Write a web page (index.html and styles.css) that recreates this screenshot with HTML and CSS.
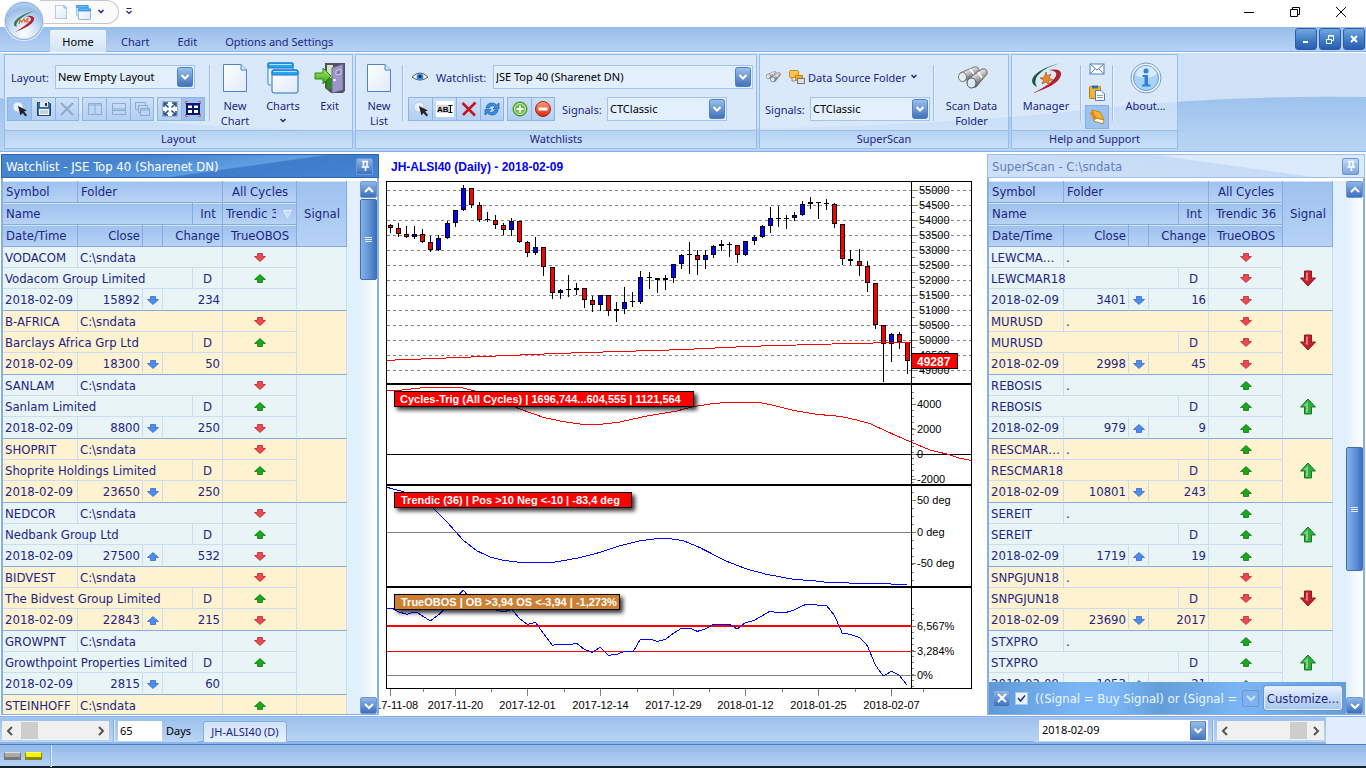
FILE: index.html
```html
<!DOCTYPE html>
<html lang="en">
<head>
    <meta charset="UTF-8">
    <meta name="viewport" content="width=device-width, initial-scale=1.0">
    <title>JH-ALSI40 (Daily)</title>
    <link rel="stylesheet" href="styles.css">
</head>
<body>
    <!-- Shared icons -->
    <svg class="defs" width="0" height="0" aria-hidden="true">
        <defs>
            <linearGradient id="gPaper" x1="0" y1="0" x2="1" y2="1">
                <stop offset="0" stop-color="#ffffff"/><stop offset="1" stop-color="#dfe9f8"/>
            </linearGradient>
            <linearGradient id="gGreen" x1="0" y1="0" x2="0" y2="1">
                <stop offset="0" stop-color="#a4ee60"/><stop offset="1" stop-color="#3aa51c"/>
            </linearGradient>
            <linearGradient id="gTube" x1="0" y1="0" x2="0.6" y2="1">
                <stop offset="0" stop-color="#ffffff"/><stop offset="0.45" stop-color="#d5d5d5"/><stop offset="1" stop-color="#444"/>
            </linearGradient>
            <linearGradient id="gRed" x1="0" y1="0" x2="0" y2="1">
                <stop offset="0" stop-color="#ff9a80"/><stop offset="1" stop-color="#d42a10"/>
            </linearGradient>
        </defs>
        <symbol id="page" viewBox="0 0 24 28">
            <path d="M0.5 0.5H18L23.5 6V27.5H0.5Z" fill="url(#gPaper)" stroke="#4a86c5"/>
            <path d="M18 0.5V6H23.5" fill="#d5e5f8" stroke="#4a86c5"/>
        </symbol>
        <symbol id="windows" viewBox="0 0 32 32">
            <path d="M4 23H2Q1 23 1 21V1H26V8" fill="#f4f4ff" stroke="#1b86dd"/>
            <rect x="1" y="1" width="25" height="5" rx="1" fill="#27a3f5" stroke="#1277cc"/>
            <rect x="2.500" y="2" width="22" height="1" fill="#b5e2ff"/>
            <rect x="5" y="8" width="26" height="23" rx="2" fill="url(#gPaper)" stroke="#1b6fc0"/>
            <rect x="5" y="8" width="26" height="5" rx="1" fill="#27a3f5" stroke="#1277cc"/>
            <rect x="6.500" y="9" width="23" height="1" fill="#b5e2ff"/>
        </symbol>
        <symbol id="exit" viewBox="0 0 32 32">
            <path d="M11 1H31V29L29 31H17L11 26Z" fill="#55505c"/>
            <path d="M13 3H19V27H13Z" fill="#cfe8c8"/>
            <path d="M13 16H19V27H13Z" fill="#2b8f1d"/>
            <path d="M18 6L29 2V28L18 31Z" fill="#9b95c8" stroke="#6a6598"/>
            <path d="M22 9L27 7V12L22 13Z" fill="#7f79b5" stroke="#dcd9f2" stroke-width="0.8"/>
            <circle cx="20.500" cy="18" r="1.300" fill="#fff"/>
            <path d="M1 11H9V6L17 14L9 22V17H1Z" fill="url(#gGreen)" stroke="#2c8a12"/>
        </symbol>
        <symbol id="binoc" viewBox="0 0 32 32">
            <path d="M4 11L18 5Q23 4 23 9L9 19Q2 19 4 11Z" fill="url(#gTube)" stroke="#777"/>
            <path d="M12 17L26 7Q32 6 31 12L20 25Q11 27 12 17Z" fill="url(#gTube)" stroke="#666"/>
            <path d="M14 7L18 12M22 10L26 16" stroke="#fff" stroke-width="1.500"/>
            <ellipse cx="6.500" cy="15" rx="4" ry="4.500" fill="#e6ecf4" stroke="#777"/>
            <ellipse cx="15.500" cy="21" rx="4.500" ry="5" fill="#dfeaf7" stroke="#44546c"/>
        </symbol>
        <symbol id="swirl" viewBox="0 0 32 32">
            <path d="M31 1Q12 5 4 14Q-1 21 7 25Q3 19 8 13Q15 5 31 1Z" fill="#17592f"/>
            <path d="M19 8Q32 6 31 13Q29 23 3 31Q22 22 26 14Q28 9 19 8Z" fill="#b3222b"/>
            <path d="M16 10L17 14L21 12L19 16L23 18L18.500 18.500L19 23L16 20L12 22L13.500 18L10 16L14 15.500Z" fill="#e8862b" stroke="#b3541a" stroke-width="0.7"/>
        </symbol>
        <symbol id="logo" viewBox="0 0 24 24">
            <path d="M22 2Q9 5 3 12Q0 17 5 18Q3 15 7 11Q12 6 22 2Z" fill="#2f7a48"/>
            <path d="M14 7Q23 6 22 11Q20 17 3 23Q15 16 19 11Q20 8 14 7Z" fill="#b3222b"/>
            <path d="M7 15L8 11L10 13L12 10L13 13L16 9L15 13L17 13" fill="none" stroke="#e06a2b" stroke-width="1.200"/>
        </symbol>
        <symbol id="cursor" viewBox="0 0 16 16">
            <circle cx="6" cy="6" r="5" fill="#e9f1fb" stroke="#b5cbe8"/>
            <path d="M6 5L15 9.500L12 10.500L15 14L13.500 15.500L10.500 12L8.500 14.500Z" fill="#222"/>
        </symbol>
        <symbol id="envelope" viewBox="0 0 16 16">
            <rect x="1" y="3" width="14" height="10" fill="#fff" stroke="#4d7ebb"/>
            <path d="M1.500 3.500L8 9L14.500 3.500M1.500 12.500L6 8M14.500 12.500L10 8" fill="none" stroke="#4d7ebb"/>
        </symbol>
        <symbol id="down" viewBox="0 0 12 9"><path d="M3.500 0.500H8.500V3.500H11.500L6 8.500L0.500 3.500H3.500Z" stroke-width="0.700"/></symbol>
        <symbol id="up" viewBox="0 0 12 9"><path d="M3.500 8.500H8.500V5.500H11.500L6 0.500L0.500 5.500H3.500Z" stroke-width="0.700"/></symbol>
        <symbol id="bigDown" viewBox="0 0 16 17"><path d="M4.500 1H11.500V8H15.500L8 16L0.500 8H4.500Z"/><path d="M6 2.500H8V11L4 9.500H6Z" fill="#fff" fill-opacity="0.4" stroke="none"/></symbol>
        <symbol id="bigUp" viewBox="0 0 16 17"><path d="M4.500 16H11.500V9H15.500L8 1L0.500 9H4.500Z"/><path d="M6 14.500H8V3.500L3 8H6Z" fill="#fff" fill-opacity="0.4" stroke="none"/></symbol>
        <symbol id="pin" viewBox="0 0 16 16"><path d="M5 3.500H11M6.500 3.500V9M10 3.500V9M4.500 9H12M8.500 9V13" fill="none" stroke="#fff" stroke-width="1.500"/></symbol>
    </svg>

    <header class="titlebar">
        <button class="orb" aria-label="Application menu"><svg width="24" height="24"><use href="#logo"/></svg></button>
        <div class="quick">
            <button class="plain" aria-label="New"><svg width="12" height="14"><use href="#page"/></svg></button>
            <button class="plain" aria-label="Charts"><svg width="15" height="15"><use href="#windows"/></svg></button>
            <svg width="6" height="6"><path d="M0.500 1L3 3.500L5.500 1" fill="none" stroke="#1c2585" stroke-width="1.500"/></svg>
        </div>
        <svg width="6" height="8"><path d="M0.500 0.500H5.500M0.500 3L3 5.500L5.500 3" fill="none" stroke="#1c2585" stroke-width="1.200"/></svg>
        <div class="win-buttons">
            <button class="plain" aria-label="Minimize"><svg width="12" height="12"><path d="M1 6.500H11" stroke="#000"/></svg></button>
            <button class="plain" aria-label="Restore"><svg width="12" height="12"><path d="M1.500 3.500H8.500V10.500H1.500ZM3.500 3.500V1.500H10.500V8.500H8.500" fill="none" stroke="#000"/></svg></button>
            <button class="plain" aria-label="Close"><svg width="12" height="12"><path d="M1 1L11 11M11 1L1 11" stroke="#000"/></svg></button>
        </div>
    </header>

    <nav class="tabs">
        <button class="tab active">Home</button>
        <button class="tab">Chart</button>
        <button class="tab">Edit</button>
        <button class="tab">Options and Settings</button>
        <div class="mdi">
            <button class="glossy" aria-label="Minimize chart"><svg width="16" height="16"><path d="M5 11H10" stroke="#fff" stroke-width="2"/></svg></button>
            <button class="glossy" aria-label="Restore chart"><svg width="16" height="16"><path d="M4.500 8.500H9.500V12.500H4.500ZM6.500 8V4.500H11.500V9.500H10M6 5H12M4 8.500H10" fill="none" stroke="#fff"/></svg></button>
            <button class="glossy" aria-label="Close chart"><svg width="16" height="16"><path d="M5 5L11 11M11 5L5 11" stroke="#fff" stroke-width="2"/></svg></button>
        </div>
    </nav>

    <section class="ribbon">
        <fieldset class="group">
            <div class="group-body">
                <div class="fields">
                    <div class="row indent">
                        <label class="w44" for="layoutSel">Layout:</label>
                        <select id="layoutSel" class="s140"><option>New Empty Layout</option></select>
                    </div>
                    <div class="row">
                        <div class="strip">
                            <button class="on" aria-label="Select"><svg width="16" height="16"><use href="#cursor"/></svg></button>
                            <button aria-label="Save"><svg width="16" height="16"><path d="M1.500 1.500H13L14.500 3V14.500H1.500Z" fill="#3a6ea8" stroke="#1d4370"/><path d="M4 1H12V6H4Z" fill="#dfe7ef"/><path d="M9 2H11V5H9Z" fill="#333"/><path d="M3 8H13V14H3Z" fill="#fff"/><path d="M4 10H12M4 12H12" stroke="#8ba4c0"/></svg></button>
                            <button aria-label="Delete"><svg width="16" height="16"><path d="M2 2L14 14M14 2L2 14" stroke="#8fa9c9" stroke-width="2"/></svg></button>
                        </div>
                        <div class="strip">
                            <button aria-label="Tile vertical"><svg width="16" height="16"><path d="M1.500 2.500H14.500V13.500H1.500ZM8 2.500V13.500M1.500 4H14.500" fill="none" stroke="#8aabd3"/></svg></button>
                            <button aria-label="Tile horizontal"><svg width="16" height="16"><path d="M1.500 2.500H14.500V13.500H1.500ZM1.500 8H14.500M1.500 9.500H14.500" fill="none" stroke="#8aabd3"/></svg></button>
                            <button aria-label="Cascade"><svg width="16" height="16"><path d="M4 8.500H1.500V1.500H11.500V4M6.500 11.500H4.500V4.500H13.500V7M6.500 7.500H15.500V14.500H6.500ZM6.500 9H15.500" fill="none" stroke="#8aabd3"/></svg></button>
                        </div>
                        <div class="strip">
                            <button aria-label="Full screen"><svg width="16" height="16"><rect x="0.500" y="0.500" width="15" height="15" fill="#fff" stroke="#9ab0c8"/><path d="M2 6V2H6M10 2H14V6M14 10V14H10M6 14H2V10M3 3L6.500 6.500M13 3L9.500 6.500M13 13L9.500 9.500M3 13L6.500 9.500" fill="none" stroke="#1f4a84" stroke-width="1.500"/></svg></button>
                            <button class="on" aria-label="Grid"><svg width="16" height="16"><rect x="1" y="2" width="14" height="12" fill="#0c1470"/><path d="M3 4.500H7V7H3ZM9 4.500H13V7H9ZM3 9H7V12H3ZM9 9H13V12H9Z" fill="#fff"/><path d="M0.500 3V0.500H3M13 0.500H15.500V3M15.500 13V15.500H13M3 15.500H0.500V13" fill="none" stroke="#f05050"/></svg></button>
                        </div>
                    </div>
                </div>
                <div class="sep"></div>
                <button class="big"><svg width="24" height="28"><use href="#page"/></svg><span>New<br>Chart</span></button>
                <button class="big"><svg width="32" height="32"><use href="#windows"/></svg><span>Charts</span><svg class="drop" width="6" height="6"><path d="M0.500 1L3 3.500L5.500 1" fill="none" stroke="#1c2585" stroke-width="1.500"/></svg></button>
                <button class="big w45"><svg width="32" height="32"><use href="#exit"/></svg><span>Exit</span></button>
            </div>
            <div class="group-name">Layout</div>
        </fieldset>

        <fieldset class="group">
            <div class="group-body">
                <button class="big w46"><svg width="24" height="28"><use href="#page"/></svg><span>New<br>List</span></button>
                <div class="sep"></div>
                <div class="fields">
                    <div class="row indent">
                        <svg width="16" height="16"><path d="M0 8Q8 0 16 8Q8 14 0 8Z" fill="#fff" stroke="#555"/><circle cx="8" cy="8" r="3.500" fill="#3c8fd0"/><circle cx="8" cy="7.500" r="1.500" fill="#124"/></svg>
                        <label class="w57 gap" for="watchSel">Watchlist:</label>
                        <select id="watchSel" class="s260"><option>JSE Top 40 (Sharenet DN)</option></select>
                    </div>
                    <div class="row">
                        <div class="strip">
                            <button aria-label="Pick"><svg width="16" height="16"><use href="#cursor"/></svg></button>
                            <button aria-label="Rename"><svg width="18" height="16"><rect width="18" height="16" fill="#fff"/><rect x="1" y="4" width="13" height="8" fill="#d8d8d8"/><text x="1" y="11" class="abi">AB</text><path d="M12.500 4.500H16.500M14.500 4.500V11.500M12.500 11.500H16.500" stroke="#000"/></svg></button>
                            <button aria-label="Remove list"><svg width="16" height="16"><path d="M1.500 2L14 14.500M14.500 1.500L2 14" stroke="#c4161c" stroke-width="2.500"/></svg></button>
                            <button aria-label="Refresh"><svg width="16" height="16"><path d="M2 7Q3 2 8 2Q11 2 12.500 4L15 2V8H9L11 6Q8 3 5 7ZM14 9Q13 14 8 14Q5 14 3.500 12L1 14V8.500H7L5 10.500Q8 13 11 9Z" fill="#3b8fe0" stroke="#1b5da8" stroke-width="0.7"/></svg></button>
                        </div>
                        <div class="strip">
                            <button aria-label="Add"><svg width="16" height="16"><circle cx="8" cy="8" r="7" fill="#6cc04a" stroke="#3c8a2a"/><circle cx="8" cy="8" r="5.500" fill="none" stroke="#c8f0b4"/><path d="M8 4.500V11.500M4.500 8H11.500" stroke="#fff" stroke-width="2"/></svg></button>
                            <button aria-label="Subtract"><svg width="16" height="16"><circle cx="8" cy="8" r="7.500" fill="url(#gRed)" stroke="#b02010"/><path d="M3.500 8H12.500" stroke="#fff" stroke-width="3"/></svg></button>
                        </div>
                        <label class="w45 lead" for="sigSel">Signals:</label>
                        <select id="sigSel" class="s120"><option>CTClassic</option></select>
                    </div>
                </div>
            </div>
            <div class="group-name">Watchlists</div>
        </fieldset>

        <fieldset class="group">
            <div class="group-body">
                <div class="fields inset">
                    <div class="row">
                        <svg width="16" height="16"><use href="#binoc"/></svg>
                        <button class="plain source">
                            <svg width="16" height="16"><rect x="0.500" y="1.500" width="9" height="7" rx="1" fill="#fbc348" stroke="#c98a1a"/><path d="M3 9V12H6" fill="none" stroke="#888"/><rect x="6.500" y="6.500" width="7" height="5" fill="#f5a623" stroke="#c98a1a"/><rect x="8.500" y="9.500" width="7" height="5" fill="#ddd" stroke="#777"/></svg>
                            Data Source Folder
                            <svg class="drop-right" width="6" height="6"><path d="M0.500 1L3 3.500L5.500 1" fill="none" stroke="#1c2585" stroke-width="1.500"/></svg>
                        </button>
                    </div>
                    <div class="row">
                        <label class="w45" for="scanSel">Signals:</label>
                        <select id="scanSel" class="s120"><option>CTClassic</option></select>
                    </div>
                </div>
                <div class="sep"></div>
                <button class="big w73"><svg width="32" height="32"><use href="#binoc"/></svg><span>Scan Data<br>Folder</span></button>
            </div>
            <div class="group-name">SuperScan</div>
        </fieldset>

        <fieldset class="group">
            <div class="group-body">
                <button class="big w68"><svg width="32" height="32"><use href="#swirl"/></svg><span>Manager</span></button>
                <div class="sep"></div>
                <div class="stack">
                    <button aria-label="Mail"><svg width="16" height="16"><use href="#envelope"/></svg></button>
                    <button aria-label="Paste"><svg width="16" height="16"><rect x="0.500" y="1.500" width="11" height="12" rx="1" fill="#f2b52c" stroke="#b07a12"/><rect x="3" y="0.500" width="6" height="3" fill="#3b6ea8"/><path d="M6.500 5.500H12L15.500 9V15.500H6.500Z" fill="#fff" stroke="#4d7ebb"/><path d="M8 10.500H14M8 12.500H14" stroke="#7da0cc"/></svg></button>
                    <button class="on" aria-label="Help book"><svg width="16" height="16"><path d="M3 1L11 3L15 11L7 9Z" fill="#fcb52c" stroke="#c4851a"/><path d="M3 1L1 4L5 12L7 9Z" fill="#e08a14"/><path d="M5 12L7 9L15 11L14 15Z" fill="#fff" stroke="#c4851a"/></svg></button>
                </div>
                <div class="sep"></div>
                <button class="big w63"><svg width="32" height="32"><circle cx="16" cy="16" r="15" fill="#f2f8ff" stroke="#7b9cc4"/><circle cx="16" cy="16" r="12.500" fill="#a8d2f7" stroke="#5c9ade"/><path d="M5 13Q16 20 27 12Q24 4 16 4Q8 4 5 13Z" fill="#d5ebff"/><circle cx="16" cy="9" r="2.500" fill="#2f7fd6"/><path d="M12.500 13H18V22.500H20.500V24.500H12V22.500H14.500V15H12.500Z" fill="#2f7fd6"/></svg><span>About...</span></button>
            </div>
            <div class="group-name">Help and Support</div>
        </fieldset>
    </section>

    <main class="workspace">
        <section class="panel">
            <h2 class="panel-title active">Watchlist - JSE Top 40 (Sharenet DN)<button class="mini" aria-label="Pin watchlist"><svg width="16" height="16"><use href="#pin"/></svg></button></h2>
            <div class="panel-body">
                <div class="list"><table id="watchlist"></table></div>
                <div class="scroll">
                    <button class="mini" aria-label="Scroll up"><svg width="10" height="10"><path d="M1 7L5 3L9 7" fill="none" stroke="#fff" stroke-width="2"/></svg></button>
                    <div class="thumb first"></div>
                    <button class="mini last" aria-label="Scroll down"><svg width="10" height="10"><path d="M1 3L5 7L9 3" fill="none" stroke="#fff" stroke-width="2"/></svg></button>
                </div>
            </div>
        </section>

        <section class="chart"><svg id="chart" viewBox="0 0 608 561" preserveAspectRatio="xMinYMin meet"></svg></section>

        <section class="panel">
            <h2 class="panel-title">SuperScan - C:\sndata<button class="mini soft" aria-label="Pin scan"><svg width="16" height="16"><use href="#pin"/></svg></button></h2>
            <div class="panel-body">
                <div class="list">
                    <div class="clip"><table id="superscan"></table></div>
                    <div class="filter">
                        <button class="mini" aria-label="Close filter"><svg width="10" height="10"><path d="M1 1L9 9M9 1L1 9" stroke="#fff" stroke-width="2"/></svg></button>
                        <input type="checkbox" id="filterOn" checked>
                        <label for="filterOn">((Signal = Buy Signal) or (Signal =</label>
                        <button class="mini faded" aria-label="Filter history"><svg width="10" height="10"><path d="M1 3L5 7L9 3" fill="none" stroke="#cfe3fa" stroke-width="2"/></svg></button>
                        <button class="customize">Customize...</button>
                    </div>
                </div>
                <div class="scroll">
                    <button class="mini" aria-label="Scroll up"><svg width="10" height="10"><path d="M1 7L5 3L9 7" fill="none" stroke="#fff" stroke-width="2"/></svg></button>
                    <div class="thumb second"></div>
                    <button class="mini last" aria-label="Scroll down"><svg width="10" height="10"><path d="M1 3L5 7L9 3" fill="none" stroke="#fff" stroke-width="2"/></svg></button>
                </div>
            </div>
        </section>
    </main>

    <section class="bottombar">
        <div class="bar-main">
            <div class="hscroll">
                <button class="plain" aria-label="Left"><svg width="8" height="10"><path d="M6 1L2 5L6 9" fill="none" stroke="#555" stroke-width="2"/></svg></button>
                <span class="hthumb"></span>
                <button class="plain right" aria-label="Right"><svg width="8" height="10"><path d="M2 1L6 5L2 9" fill="none" stroke="#555" stroke-width="2"/></svg></button>
            </div>
            <div class="bar-sep"></div>
            <input type="text" id="days" value="65">
            <label for="days">Days</label>
            <div class="sheet-tabs"><button class="sheet">JH-ALSI40 (D)</button></div>
            <select class="date" aria-label="Date"><option>2018-02-09</option></select>
            <div class="bar-sep"></div>
            <div class="hscroll">
                <button class="plain" aria-label="Left"><svg width="8" height="10"><path d="M6 1L2 5L6 9" fill="none" stroke="#555" stroke-width="2"/></svg></button>
                <span class="hthumb end"></span>
                <button class="plain right" aria-label="Right"><svg width="8" height="10"><path d="M2 1L6 5L2 9" fill="none" stroke="#555" stroke-width="2"/></svg></button>
            </div>
        </div>
    </section>

    <footer class="status">
        <span class="led"></span>
        <span class="led lit"></span>
        <span class="bar-sep"></span>
    </footer>

    <script src="script.js"></script>
</body>
</html>
```
FILE: styles.css
```css
* {
    box-sizing: border-box;
}

body {
    margin: 0;
    height: 100vh;
    display: flex;
    flex-direction: column;
    overflow: hidden;
    background: #fff;
    color: #1c2585;
    font-family: "Noto Sans", "Open Sans", sans-serif;
    font-size: 11px;
    line-height: 15px;
}

button, select, input {
    font: inherit;
    color: inherit;
}

svg {
    display: block;
    flex: none;
}

.defs {
    position: absolute;
}

.plain {
    border: 0;
    padding: 0;
    background: none;
    display: flex;
    align-items: center;
}

/* Title bar */
.titlebar {
    height: 27px;
    flex: none;
    display: flex;
    align-items: center;
    gap: 7px;
    padding: 0 19px 3px 40px;
    position: relative;
}

.orb {
    position: absolute;
    left: 4px;
    top: 1px;
    z-index: 2;
    width: 40px;
    height: 40px;
    padding: 0;
    display: flex;
    align-items: center;
    justify-content: center;
    border-radius: 50%;
    border: 2px solid #dceafa;
    outline: 1px solid #8aa9d2;
    outline-offset: -2px;
    background: radial-gradient(circle at 50% 85%, #ffffff, #c3daf5 45%, #9abde8 70%, #d5e5f8);
}

.quick {
    height: 24px;
    width: 79px;
    padding-left: 15px;
    display: flex;
    align-items: center;
    gap: 9px;
    border: 1px solid #c8c8cc;
    border-left: 0;
    border-radius: 0 12px 12px 0;
    background: #fafafa;
}

.quick > svg {
    margin-left: -2px;
}

.win-buttons {
    display: flex;
    gap: 34px;
    margin-left: auto;
}

/* Ribbon tabs */
.tabs {
    height: 25px;
    flex: none;
    display: flex;
    align-items: flex-end;
    padding-left: 49px;
    background: linear-gradient(#98bdea, #b7d2f3);
    border-bottom: 1px solid #86aee8;
}

.tab {
    height: 21px;
    padding: 0 13px;
    border: 1px solid transparent;
    border-bottom: 0;
    background: none;
    white-space: nowrap;
}

.tab.active {
    width: 58px;
    padding: 0;
    height: 22px;
    margin-bottom: -1px;
    color: #000;
    background: linear-gradient(#e9f3fe, #d3e4f8);
    border-color: #a6c6ef;
    border-top-color: #f6faff;
    border-radius: 3px 3px 0 0;
}

.mdi {
    display: flex;
    gap: 2px;
    margin: 0 1px 1px auto;
}

.glossy {
    width: 22px;
    height: 22px;
    padding: 0;
    display: flex;
    align-items: center;
    justify-content: center;
    border: 1px solid #2c5ca8;
    border-radius: 3px;
    background: linear-gradient(#74a9e0, #3f7cc6 55%, #285cae);
}

/* Ribbon */
.ribbon {
    height: 100px;
    flex: none;
    display: flex;
    gap: 2px;
    padding: 1px 4px 2px;
    border: 1px solid #86aee8;
    border-top-color: #fff;
    border-width: 1px 0;
    background: #cfe1f6 url("data:image/svg+xml,%3Csvg xmlns='http://www.w3.org/2000/svg' viewBox='0 0 1366 98' preserveAspectRatio='none'%3E%3ClinearGradient id='a' x2='0' y2='1'%3E%3Cstop stop-color='%239dc2ec'/%3E%3Cstop offset='1' stop-color='%23b9d5f4'/%3E%3C/linearGradient%3E%3Cpath d='M0 45Q150 82 480 78Q900 80 1100 55Q1230 42 1366 44V98H0Z' fill='url(%23a)'/%3E%3C/svg%3E") 0 0 / 100% 100%;
}

.group {
    margin: 0;
    padding: 0;
    min-width: 0;
    border: 1px solid #98bdeb;
    display: flex;
    flex-direction: column;
    background: rgba(224, 237, 252, 0.62);
}

.group-body {
    flex: 1;
    display: flex;
}

.group-name {
    height: 18px;
    line-height: 16px;
    text-align: center;
    border-top: 1px solid #98bdeb;
    background: linear-gradient(rgba(176, 207, 243, 0.8), rgba(200, 222, 247, 0.8));
}

.fields {
    padding: 10px 3px 0 2px;
    display: flex;
    flex-direction: column;
    gap: 8px;
}

.fields.inset {
    padding-left: 5px;
}

.row {
    height: 24px;
    display: flex;
    align-items: center;
    gap: 3px;
}

.row.indent {
    padding-left: 4px;
    gap: 0;
}

.gap {
    margin-left: 8px;
}

.lead {
    margin: 0 -3px 0 4px;
}

.row label {
    flex: none;
    white-space: nowrap;
}

.w44 { width: 44px; }
.w45 { width: 45px; }
.w57 { width: 57px; }
.inset .w45 { margin-right: -3px; }

select {
    appearance: none;
    height: 24px;
    padding: 0 20px 2px 2px;
    color: #000;
    border: 1px solid #a4c4ee;
    border-radius: 0;
    background: #e2effd url("data:image/svg+xml,%3Csvg xmlns='http://www.w3.org/2000/svg' width='16' height='20'%3E%3ClinearGradient id='a' x2='0' y2='1'%3E%3Cstop stop-color='%239cc0ea'/%3E%3Cstop offset='1' stop-color='%233f70b8'/%3E%3C/linearGradient%3E%3Crect x='.5' y='.5' width='15' height='19' rx='2' fill='url(%23a)' stroke='%23527fc0'/%3E%3Cpath d='M4.500 8L8 11.500L11.500 8' fill='none' stroke='white' stroke-width='2'/%3E%3C/svg%3E") no-repeat right 1px center;
}

.s120 { width: 120px; }
.s140 { width: 140px; }
.s260 { width: 260px; }

.strip {
    display: flex;
    height: 24px;
    border: 1px solid #8db4e8;
}

.strip button {
    width: 24px;
    padding: 0;
    display: flex;
    align-items: center;
    justify-content: center;
    border: 0;
    border-right: 1px solid #8db4e8;
    background: linear-gradient(#cbdff7, #b3d0f3);
}

.strip button:last-child {
    width: 22px;
    border-right: 0;
}

.strip button.on, .stack button.on {
    background: #9cc2f0;
}

.abi {
    font: bold 8px "Liberation Sans", sans-serif;
}

.sep {
    width: 2px;
    height: 56px;
    margin-top: 10px;
    border-left: 1px solid #9dbfea;
    border-right: 1px solid #e8f2fd;
}

.fields + .sep {
    margin-left: 1px;
}

.inset + .sep {
    margin-left: 0;
}

.sep + .fields {
    padding-left: 4px;
}

.big {
    width: 48px;
    padding: 7px 0 0;
    border: 0;
    background: none;
    display: flex;
    flex-direction: column;
    align-items: center;
    white-space: nowrap;
}

.big > svg:first-child {
    height: 32px;
    margin-bottom: 4px;
}

.big .drop {
    margin-top: 5px;
}

.big.w45 { width: 45px; }
.big.w46 { width: 46px; }
.big.w63 { width: 63px; }
.big.w68 { width: 68px; }
.big.w73 { width: 73px; }

.source {
    gap: 3px;
    margin-left: 5px;
}

.drop-right {
    margin-left: 2px;
}

.stack {
    padding: 2px 3px 0;
}

.stack button {
    width: 24px;
    height: 24px;
    padding: 0;
    display: flex;
    align-items: center;
    justify-content: center;
    border: 1px solid transparent;
    background: none;
}

.stack button.on {
    border-color: #86aee8;
}

/* Docked panels */
.workspace {
    flex: 1;
    min-height: 0;
    display: flex;
    padding: 2px 1px 1px;
}

.panel {
    width: 378px;
    flex: none;
    display: flex;
    flex-direction: column;
    border-bottom: 1px solid #86aee8;
    font-family: "DejaVu Sans Condensed", "DejaVu Sans", sans-serif;
    font-size: 13px;
}

.panel-title {
    height: 24px;
    flex: none;
    margin: 0;
    padding: 0 5px 0 4px;
    display: flex;
    align-items: center;
    justify-content: space-between;
    font-size: 13px;
    font-weight: normal;
    color: #5f7fc4;
    border: 1px solid #9cc0ee;
    background: linear-gradient(188deg, #dcebfc 38%, #c6dbf5 40%, #cfe1f7);
}

.panel-title.active {
    color: #fff;
    border-color: #2f62b3;
    background: linear-gradient(172deg, #4784cf 30%, #5e9fe3 60%, #3f7cca 62%, #4585d0);
}

.panel-body {
    flex: 1;
    min-height: 0;
    display: flex;
    border: solid #86aee8;
    border-width: 0 2px;
    padding-top: 3px;
}

.list {
    flex: 1;
    min-width: 0;
    overflow: hidden;
    display: flex;
    flex-direction: column;
    background: #e2effd;
}

.clip {
    flex: 1;
    min-height: 0;
    overflow: hidden;
}

table {
    width: 344px;
    table-layout: fixed;
    border-collapse: separate;
    border-spacing: 0;
}

th, td {
    height: 21px;
    padding: 1px 2px 0 2px;
    line-height: 16px;
    font-weight: normal;
    text-align: left;
    white-space: nowrap;
    overflow: hidden;
    text-overflow: ellipsis;
    border: solid #cbdcf5;
    border-width: 0 1px 1px 0;
}

th {
    height: 22px;
    padding: 1px 2px 0 3px;
    border-color: #84abe4;
    box-shadow: inset 0 1px #d6e6fa;
    background: linear-gradient(#9dc1ee, #b7d3f5);
}

.record:nth-of-type(odd) td {
    background: #e8f4f6;
}

.record:nth-of-type(even) td {
    background: #fff2d0;
}

.record tr:last-child td, .record .tall {
    height: 22px;
    border-bottom-color: #84abe4;
}

.record .tall {
    padding-top: 0;
}

td svg {
    margin: auto;
}

.num { text-align: right; }
.mid { text-align: center; }

.trend {
    text-overflow: clip;
}

.trend div {
    display: flex;
    align-items: center;
    gap: 7px;
}

.trend span {
    width: 50px;
    overflow: hidden;
}

.red { fill: #f04850; stroke: #b01c24; }
.green { fill: #18a818; stroke: #0a6a0c; }
.blue { fill: #4d8cf5; stroke: #2a5cc0; }
.sell { fill: #c4202c; stroke: #8c1a20; }
.buy { fill: #2fae3c; stroke: #127a20; }

.mini {
    width: 17px;
    height: 17px;
    flex: none;
    padding: 0;
    display: flex;
    align-items: center;
    justify-content: center;
    border: 1px solid #6d98d6;
    border-radius: 2px;
    background: linear-gradient(#8fb6e8, #3d70bb);
}

.mini.soft { background: linear-gradient(#c3dbf7, #7da6de); }
.mini.faded { background: #7fb2ec; }

.scroll {
    width: 17px;
    flex: none;
    display: flex;
    flex-direction: column;
    background: linear-gradient(90deg, #e2effd, #fff);
}

.thumb {
    border: 1px solid #3f6fb8;
    border-radius: 2px;
    background: linear-gradient(90deg, #86b1e8, #5c8fd4 60%, #3f70bb);
    display: flex;
    align-items: center;
    justify-content: center;
}

.thumb::after {
    content: "";
    width: 7px;
    height: 5px;
    background: repeating-linear-gradient(#dfebfb 0 1px, transparent 1px 2px);
}

.thumb.first {
    margin-top: 1px;
    height: 81px;
}

.thumb.second {
    margin-top: 249px;
    height: 124px;
}

.last {
    margin-top: auto;
}

.filter {
    height: 32px;
    flex: none;
    display: flex;
    align-items: center;
    gap: 5px;
    padding: 0 4px;
    color: #eef6ff;
    background: linear-gradient(90deg, #5f9ad8, #7ab6f5 25%, #7ab6f5 35%, #639ed9 48%, #7ab6f5 70%, #639ed9);
}

.filter label {
    flex: 1;
    min-width: 0;
    padding-left: 2px;
    white-space: nowrap;
}

.filter input {
    appearance: none;
    width: 13px;
    height: 13px;
    flex: none;
    margin: 0;
    border: 1px solid #a8c8f0;
    background: #e8f1fc url("data:image/svg+xml,%3Csvg xmlns='http://www.w3.org/2000/svg' width='11' height='11'%3E%3Cpath d='M2 5L4.500 8L9 2.500' fill='none' stroke='%231c3585' stroke-width='1.500'/%3E%3C/svg%3E") center;
}

.customize {
    width: 78px;
    height: 24px;
    flex: none;
    padding: 0;
    color: #1c2585;
    border: 1px solid #dfeafa;
    outline: 1px solid #6f97cf;
    border-radius: 2px;
    background: linear-gradient(#e6f0fc, #a9c7ee);
}

/* Price chart */
.chart {
    flex: 1;
    min-width: 0;
    overflow: hidden;
    font-family: "Liberation Sans", sans-serif;
    font-size: 11px;
}

.chart svg {
    width: 100%;
    height: 100%;
    overflow: hidden;
    shape-rendering: crispEdges;
}

.chart text { fill: #000; }
.chart .title { font-size: 12px; font-weight: bold; fill: #00f; }
.chart .tag { font-weight: bold; fill: #fff; }
.chart .price { font-size: 12px; }
.chart .shadow { filter: drop-shadow(3px 3px 2px rgba(0, 0, 0, 0.8)); }
.line { fill: none; stroke-width: 1; }

/* Bottom bars */
.bottombar {
    height: 29px;
    flex: none;
    background: #e0edfc;
    border-top: 1px solid #86aee8;
    border-bottom: 1px solid #4f7ec4;
}

.bar-main {
    height: 27px;
    margin-right: 40px;
    padding: 1px 2px 0;
    display: flex;
    align-items: center;
    border-top: 1px solid #a9c8f0;
    border-bottom: 2px solid #8fb6e8;
    background: linear-gradient(#9dc1ec, #bad4f4);
}

.hscroll {
    width: 107px;
    height: 19px;
    display: flex;
    align-items: center;
    padding: 0 4px;
    background: #f0f0f0;
}

.hthumb {
    width: 17px;
    height: 17px;
    margin-left: 7px;
    background: #cdcdcd;
}

.hthumb.end { margin-left: 61px; }
.right { margin-left: auto; }

.bar-sep {
    width: 2px;
    height: 22px;
    margin: 0 3px 0 4px;
    border-left: 1px solid #86aee8;
    border-right: 1px solid #e2effd;
}

.bottombar input {
    width: 44px;
    height: 20px;
    padding: 0 2px;
    color: #000;
    border: 0;
    background: #fff;
}

.bottombar label {
    width: 36px;
    color: #000;
    padding-left: 4px;
}

.sheet-tabs {
    flex: 1;
    height: 22px;
    padding-left: 5px;
    margin-right: 5px;
    border-bottom: 1px solid #86aee8;
}

.sheet {
    width: 84px;
    height: 21px;
    padding: 0;
    margin-top: 1px;
    white-space: nowrap;
    border: 1px solid #86aee8;
    border-bottom: 0;
    border-radius: 3px 3px 0 0;
    background: linear-gradient(#cfe2f9, #e6f1fe);
}

.date {
    width: 169px;
    height: 21px;
    background-color: #fff;
    border-color: #fff;
}

.status {
    height: 23px;
    flex: none;
    display: flex;
    align-items: center;
    padding-left: 4px;
    gap: 4px;
    border-bottom: 2px solid #16202c;
    background: linear-gradient(#93b9e8, #b5d1f3);
}

.led {
    width: 17px;
    height: 8px;
    border: 1px solid #777;
    border-bottom-width: 3px;
    border-top-color: #ddd;
    background: #aaa;
}

.led.lit {
    border-color: #ffff70 #8a8a00 #8a8a00;
    background: #f5f500;
}
```
FILE: script.js
```js
// ---- Tables ----
const watchlist = [
    ['VODACOM', 'C:\\sndata', 'Vodacom Group Limited', 15892, 'd', 234, 'du-'],
    ['B-AFRICA', 'C:\\sndata', 'Barclays Africa Grp Ltd', 18300, 'd', 50, 'du-'],
    ['SANLAM', 'C:\\sndata', 'Sanlam Limited', 8800, 'd', 250, 'dud'],
    ['SHOPRIT', 'C:\\sndata', 'Shoprite Holdings Limited', 23650, 'd', 250, 'du-'],
    ['NEDCOR', 'C:\\sndata', 'Nedbank Group Ltd', 27500, 'u', 532, 'dud'],
    ['BIDVEST', 'C:\\sndata', 'The Bidvest Group Limited', 22843, 'u', 215, 'dud'],
    ['GROWPNT', 'C:\\sndata', 'Growthpoint Properties Limited', 2815, 'd', 60, 'du-'],
    ['STEINHOFF', 'C:\\sndata', '', '', '-', '', 'u--']
];

const superscan = [
    ['LEWCMAR18', '.', 'LEWCMAR18', 3401, 'd', 16, 'ddd', 'sell'],
    ['MURUSD', '.', 'MURUSD', 2998, 'd', 45, 'ddd', 'sell'],
    ['REBOSIS', '.', 'REBOSIS', 979, 'u', 9, 'uuu', 'buy'],
    ['RESCMAR18', '.', 'RESCMAR18', 10801, 'd', 243, 'uuu', 'buy'],
    ['SEREIT', '.', 'SEREIT', 1719, 'u', 19, 'uuu', 'buy'],
    ['SNPGJUN18', '.', 'SNPGJUN18', 23690, 'd', 2017, 'ddd', 'sell'],
    ['STXPRO', '.', 'STXPRO', 1053, 'u', 21, 'uuu', 'buy']
];

function arrow(dir, color) {
    if (dir === '-') return '';
    const cls = color || (dir === 'u' ? 'green' : 'red');
    return `<svg width="12" height="9" class="${cls}"><use href="#${dir === 'u' ? 'up' : 'down'}"/></svg>`;
}

function signal(kind) {
    if (!kind) return '';
    return `<svg width="16" height="17" class="${kind}"><use href="#${kind === 'buy' ? 'bigUp' : 'bigDown'}"/></svg>`;
}

function buildTable(id, rows, trendHeader) {
    let html = '<colgroup>' + [75, 65, 20, 30, 30, 74, 50].map(w => `<col style="width:${w}px">`).join('') + '</colgroup>';
    html += `<thead>
        <tr><th>Symbol</th><th colspan="4">Folder</th><th class="mid">All Cycles</th><th class="mid" rowspan="3">Signal</th></tr>
        <tr><th colspan="4">Name</th><th class="mid">Int</th>${trendHeader}</tr>
        <tr><th>Date/Time</th><th class="num">Close</th><th></th><th class="num" colspan="2">Change</th><th class="mid">TrueOBOS</th></tr>
    </thead>`;
    rows.forEach(([symbol, folder, name, close, dir, change, marks, sig]) => {
        html += `<tbody class="record">
            <tr><td>${symbol}</td><td colspan="4">${folder}</td><td>${arrow(marks[0])}</td><td class="tall" rowspan="3">${signal(sig)}</td></tr>
            <tr><td colspan="4">${name}</td><td class="mid">D</td><td>${arrow(marks[1])}</td></tr>
            <tr><td>2018-02-09</td><td class="num">${close}</td><td>${arrow(dir, 'blue')}</td><td class="num" colspan="2">${change}</td><td>${arrow(marks[2])}</td></tr>
        </tbody>`;
    });
    document.getElementById(id).innerHTML = html;
}

buildTable('watchlist', watchlist,
    '<th class="trend"><div><span>Trendic 36</span><svg width="9" height="8"><path d="M0.500 0.500H8.500L4.500 7.500Z" fill="#c5dbf6" stroke="#e8f2fd"/></svg></div></th>');
buildTable('superscan', superscan, '<th class="mid">Trendic 36</th>');

// ---- Chart ----
// All series are kept in thirds of a pixel: [x, high, bodyTop, bodyBottom, low, kind]
const candles = [
    [31, 222, 226, 233, 248, 'r'], [55, 219, 235, 251, 260, 'r'], [79, 228, 253, 260, 263, 'r'], [103, 228, 253, 260, 266, 'b'],
    [127, 237, 253, 275, 278, 'r'], [151, 258, 277, 299, 305, 'r'], [175, 255, 265, 299, 302, 'b'], [202, 214, 220, 263, 266, 'b'],
    [226, 181, 181, 217, 230, 'b'], [250, 105, 115, 179, 182, 'b'], [274, 115, 115, 163, 173, 'r'], [298, 156, 166, 209, 215, 'r'],
    [322, 186, 208, 208, 215, 'k'], [346, 195, 211, 223, 236, 'r'], [370, 220, 226, 239, 254, 'r'], [394, 205, 214, 239, 257, 'b'],
    [418, 213, 214, 275, 278, 'r'], [442, 273, 277, 307, 320, 'r'], [466, 261, 292, 307, 314, 'b'], [490, 292, 292, 350, 377, 'r'],
    [517, 352, 352, 428, 446, 'r'], [541, 417, 421, 428, 446, 'b'], [565, 375, 418, 418, 440, 'k'], [589, 399, 415, 418, 434, 'k'],
    [613, 415, 415, 449, 473, 'r'], [637, 438, 451, 464, 485, 'r'], [661, 436, 436, 464, 482, 'b'], [685, 436, 436, 482, 497, 'r'],
    [709, 456, 478, 481, 515, 'k'], [733, 411, 457, 476, 491, 'b'], [757, 426, 454, 454, 470, 'k'], [781, 363, 382, 455, 460, 'b'],
    [808, 366, 382, 382, 416, 'k'], [832, 385, 385, 388, 428, 'k'], [856, 376, 385, 388, 419, 'k'], [880, 343, 343, 383, 398, 'b'],
    [904, 312, 316, 341, 356, 'b'], [928, 276, 313, 313, 371, 'k'], [952, 300, 316, 329, 374, 'r'], [976, 302, 316, 329, 356, 'b'],
    [1000, 285, 289, 314, 323, 'b'], [1024, 270, 283, 286, 302, 'k'], [1048, 278, 283, 283, 320, 'k'], [1072, 286, 286, 314, 338, 'r'],
    [1096, 274, 274, 314, 317, 'b'], [1123, 255, 262, 272, 284, 'b'], [1147, 225, 229, 260, 263, 'b'], [1171, 171, 205, 227, 248, 'b'],
    [1195, 168, 206, 206, 230, 'k'], [1219, 195, 206, 206, 236, 'k'], [1243, 186, 196, 203, 212, 'b'], [1267, 153, 163, 194, 197, 'b'],
    [1291, 141, 157, 160, 176, 'k'], [1315, 157, 157, 157, 206, 'k'], [1339, 147, 160, 160, 179, 'k'], [1363, 160, 163, 221, 233, 'r'],
    [1387, 223, 223, 326, 344, 'r'], [1411, 300, 328, 331, 344, 'k'], [1438, 297, 334, 347, 377, 'r'], [1462, 333, 349, 398, 425, 'r'],
    [1486, 400, 400, 524, 536, 'r'], [1510, 526, 526, 580, 695, 'r'], [1534, 549, 553, 580, 635, 'b'], [1558, 546, 553, 575, 596, 'r'],
    [1582, 577, 577, 632, 671, 'r']
];

const average = [[21, 631], [300, 620], [540, 610], [900, 599], [1110, 589], [1250, 585], [1425, 580], [1593, 577]];

const cycles = [[21, 723], [66, 720], [140, 712], [240, 712], [285, 723], [350, 745], [410, 773], [450, 788], [490, 802], [550, 815],
    [600, 822], [670, 822], [720, 816], [800, 798], [890, 783], [940, 770], [990, 762], [1040, 757], [1135, 757], [1180, 766],
    [1240, 781], [1310, 793], [1380, 799], [1430, 810], [1470, 821], [1540, 853], [1595, 877], [1650, 900], [1700, 912], [1740, 925],
    [1773, 931]];

const trendic = [[21, 1012], [66, 1024], [110, 1040], [160, 1075], [200, 1115], [250, 1171], [290, 1202], [330, 1221], [370, 1231],
    [420, 1237], [475, 1239], [520, 1237], [600, 1223], [660, 1207], [720, 1187], [780, 1172], [840, 1165], [870, 1166], [910, 1172],
    [960, 1193], [1040, 1234], [1100, 1257], [1160, 1273], [1240, 1288], [1300, 1292], [1340, 1297], [1440, 1300], [1580, 1303]];

const obos = [[21, 1375], [37, 1375], [55, 1385], [80, 1393], [97, 1388], [112, 1388], [151, 1413], [175, 1395], [200, 1370],
    [250, 1321], [262, 1335], [300, 1370], [340, 1378], [370, 1386], [395, 1378], [418, 1405], [442, 1423], [466, 1417], [517, 1486],
    [530, 1483], [575, 1483], [590, 1480], [613, 1498], [637, 1507], [661, 1492], [685, 1516], [712, 1513], [733, 1504], [760, 1504],
    [781, 1468], [812, 1468], [832, 1474], [856, 1468], [880, 1450], [904, 1435], [930, 1435], [952, 1444], [976, 1437], [1000, 1423],
    [1048, 1423], [1072, 1437], [1096, 1418], [1123, 1411], [1171, 1383], [1185, 1387], [1219, 1387], [1243, 1380], [1267, 1367],
    [1280, 1363], [1300, 1363], [1315, 1366], [1340, 1367], [1363, 1396], [1387, 1450], [1411, 1453], [1438, 1462], [1462, 1487],
    [1486, 1545], [1510, 1578], [1534, 1564], [1558, 1576], [1580, 1604]];

const px = v => v / 3 + 1;
const py = v => v / 3 - 4;
const FRAME = { left: 7.5, right: 592.5, top: 27.5, bottom: 534.5, axis: 532.5 };

const hline = (y, color, width, x2, extra) =>
    `<line x1="${FRAME.left}" x2="${x2}" y1="${y}" y2="${y}" stroke="${color}" stroke-width="${width}" ${extra || ''}/>`;
const vline = (x, y1, y2, color) => `<line x1="${x}" x2="${x}" y1="${y1}" y2="${y2}" stroke="${color}"/>`;
const tick = (y, len) => `<line x1="533" x2="${533 + len}" y1="${y}" y2="${y}" stroke="#808080"/>`;
const text = (x, y, str, cls, anchor) => `<text x="${x}" y="${y}" class="${cls || ''}" text-anchor="${anchor || 'start'}">${str}</text>`;
const curve = (pts, color) => `<polyline class="line" stroke="${color}" points="${pts.map(p => px(p[0]) + ',' + py(p[1])).join(' ')}"/>`;

let out = text(12, 17, 'JH-ALSI40 (Daily) - 2018-02-09', 'title');

// price grid
for (let i = 0; i < 13; i++) {
    const y = 36.5 + i * 15;
    out += hline(y, '#808080', 1, FRAME.right, 'stroke-dasharray="3 3"');
    out += tick(y, 6) + tick(y + 7, 3);
    out += text(540, y + 3.5, 55000 - i * 500);
}

candles.forEach(([x, hi, top, bottom, lo, kind]) => {
    const cx = Math.floor(px(x)) + 0.5;
    const y1 = Math.floor(py(top)) + 0.5;
    const y2 = Math.floor(py(bottom)) + 0.5;
    const fill = { r: '#f00', b: '#00f', k: '#000' }[kind];
    out += vline(cx, Math.floor(py(hi)), Math.ceil(py(lo)), '#000');
    if (y1 === y2) {
        out += `<line x1="${cx - 2.5}" x2="${cx + 2.5}" y1="${y1}" y2="${y1}" stroke="#000"/>`;
    } else {
        out += `<rect x="${cx - 2}" y="${y1}" width="4" height="${y2 - y1}" fill="${fill}" stroke="#000"/>`;
    }
});
out += curve(average, '#f00');

// indicator levels
out += hline(300.5, '#000', 1, FRAME.right);
out += hline(378.5, '#808080', 1, FRAME.axis);
out += hline(472, '#f00', 2, FRAME.axis);
out += hline(497.5, '#f00', 1, FRAME.axis);
out += hline(521.5, '#808080', 1, FRAME.axis);
out += curve(cycles, '#f00') + curve(trendic, '#00f') + curve(obos, '#00f');

// scales
[[250.5, '4000'], [275.5, '2000'], [300.5, '0'], [325.5, '-2000'], [346.5, '50 deg'], [378.5, '0 deg'], [409.5, '-50 deg'],
    [472.5, '6,567%'], [497.5, '3,284%'], [521.5, '0%']].forEach(([y, label]) => {
    out += tick(y, 4) + text(538, y + 3.5, label);
});
for (let y = 238.5; y < 330; y += 6) out += tick(y, 2);
for (let y = 338.5; y < 430; y += 8) out += tick(y, 2);
for (let y = 454.5; y < 534; y += 6) out += tick(y, 2);

// frame and panes
out += `<rect x="${FRAME.left}" y="${FRAME.top}" width="585" height="507" fill="none" stroke="#000"/>`;
out += vline(FRAME.axis, FRAME.top, FRAME.bottom, '#000');
[230, 331, 433].forEach(y => { out += hline(y, '#000', 2, FRAME.right); });

// dates
[[11.5, '2017-11-08'], [76.5, '2017-11-20'], [148.5, '2017-12-01'], [221.5, '2017-12-14'], [294.5, '2017-12-29'],
    [366.5, '2018-01-12'], [439.5, '2018-01-25'], [512.5, '2018-02-07']].forEach(([x, label]) => {
    out += vline(x, 535, 542, '#808080') + text(x, 555, label, '', 'middle');
});
[44.5, 112.5, 185.5, 258.5, 330.5, 403.5, 476.5, 544.5].forEach(x => { out += vline(x, 535, 538, '#808080'); });

// captions
[[237.5, 299, '#f00', 'Cycles-Trig (All Cycles) | 1696,744...604,555 | 1121,564', 21],
    [338.5, 237, '#f00', 'Trendic (36) | Pos &gt;10 Neg &lt;-10 | -83,4 deg', 22],
    [440.5, 225, '#cd7f32', 'TrueOBOS | OB &gt;3,94 OS &lt;-3,94 | -1,273%', 22]].forEach(([y, w, color, label, x]) => {
    out += `<rect class="shadow" x="15.500" y="${y}" width="${w}" height="15" fill="${color}" stroke="#000"/>` + text(x, y + 11.5, label, 'tag');
});
out += '<rect x="532.500" y="199.500" width="46" height="15" fill="#f00" stroke="#000"/>' + text(538, 211.5, '49287', 'tag price');

document.getElementById('chart').innerHTML = out;
```
